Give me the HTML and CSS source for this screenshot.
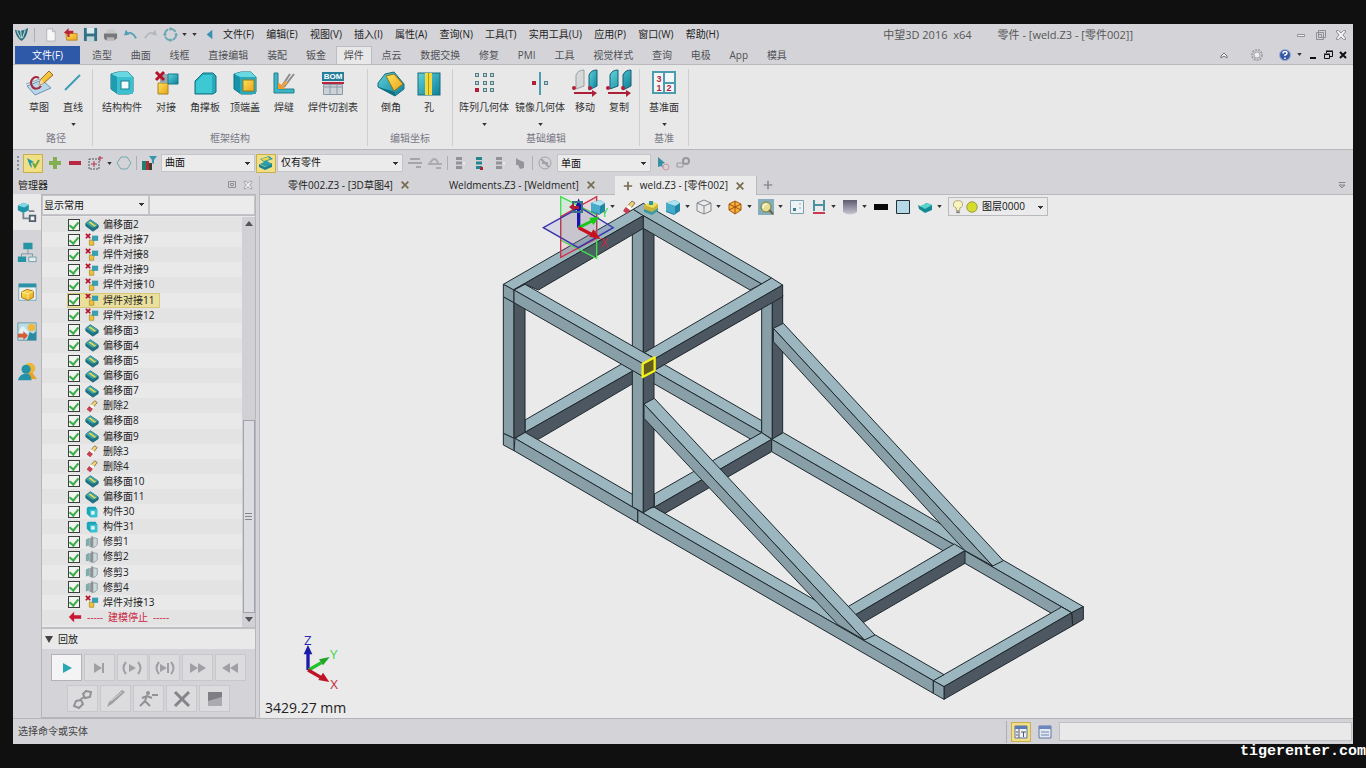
FILE: index.html
```
<!DOCTYPE html>
<html lang="zh-CN">

<head>
  <meta charset="UTF-8">
  <title>中望3D 2016 x64</title>
  <link rel="stylesheet" href="styles.css">
</head>

<body>
  <!-- Icon sprite -->
  <svg class="sprite" aria-hidden="true">
    <defs>
      <linearGradient id="teal" x1="0" y1="0" x2="1" y2="1"><stop offset="0" stop-color="#5fd3dc"/><stop offset="1" stop-color="#0e7f98"/></linearGradient>
      <linearGradient id="gold" x1="0" y1="0" x2="1" y2="1"><stop offset="0" stop-color="#ffe35a"/><stop offset="1" stop-color="#e8a41c"/></linearGradient>
      <linearGradient id="grey" x1="0" y1="0" x2="0" y2="1"><stop offset="0" stop-color="#5d5b70"/><stop offset="1" stop-color="#c9c8d4"/></linearGradient>
    </defs>
    <!-- large ribbon icons -->
    <symbol id="b-sketch" viewBox="0 0 28 28"><path d="M2 17l15-6 9 8-16 7z" fill="#b9d5e8" stroke="#6d93b0"/><path d="M1 15l14-5 5 3" fill="none" stroke="#7fa4bd"/><path d="M14 9c-5-3-10 3-7 8 2 4 7 3 9 0" fill="none" stroke="#a4283c" stroke-width="2"/><path d="M14 16l2-6 8-8 4 4-9 8z" fill="url(#gold)" stroke="#9a6b1c"/><path d="M14 16l2-6 3 4z" fill="#f5dcae"/></symbol>
    <symbol id="b-line" viewBox="0 0 28 28"><path d="M6 21L21 6" stroke="#3f9db5" stroke-width="2"/></symbol>
    <symbol id="b-struct" viewBox="0 0 28 28"><path d="M3 5l7-2h10l5 5v15l-4 2H10l-7-5z" fill="#1593a8" stroke="#0e7385"/><path d="M3 5l7-2h10l5 5H9z" fill="#68d8e2"/><path d="M3 5l6 3v17l-6-5z" fill="#1e9db0"/><rect x="9" y="8" width="16" height="17" fill="#3cc0cf"/><rect x="13" y="12" width="8" height="8" fill="#f3fbfc" stroke="#187f90"/></symbol>
    <symbol id="b-butt" viewBox="0 0 28 28"><path d="M6 14h10v11H6z" fill="url(#gold)" stroke="#a98022"/><path d="M8 5h8v9H8z" fill="#98a9ae"/><path d="M16 5h10v10H16z" fill="url(#teal)" stroke="#137a8c"/><path d="M4 3l8 8M12 3l-8 8" stroke="#b5122e" stroke-width="3"/></symbol>
    <symbol id="b-gusset" viewBox="0 0 28 28"><path d="M4 12l8-8h10l3 3v16l-3 2H4z" fill="#2ba9ba" stroke="#0f7484"/><path d="M5 13l7-7h9v18H5z" fill="#3cc9d4"/></symbol>
    <symbol id="b-cap" viewBox="0 0 28 28"><path d="M3 5l7-2h10l5 5v15l-4 2H10l-7-5z" fill="#1593a8" stroke="#0e7385"/><path d="M3 5l7-2h10l5 5H9z" fill="#68d8e2"/><path d="M9 8h16v17H9z" fill="#2ba9ba"/><rect x="12" y="11" width="11" height="11" fill="url(#gold)" stroke="#9f7c16"/></symbol>
    <symbol id="b-weld" viewBox="0 0 28 28"><path d="M4 4h4v16h16v4H4z" fill="#3fb4c4" stroke="#22808f"/><path d="M12 17L20 5M14 18L24 5" stroke="#8e8b8a" stroke-width="2"/><path d="M9 20l6-8 3 2z" fill="#f5a43a"/><path d="M8 13v7h8z" fill="#f29a2c"/></symbol>
    <symbol id="b-chamfer" viewBox="0 0 28 28"><path d="M1 14l7-9 9-2 10 12v5l-9 7L1 18z" fill="url(#teal)" stroke="#176c7c"/><path d="M9 7l8-2 9 10-9 7z" fill="url(#gold)" stroke="#8b7420"/><path d="M1 18l17 5v4z" fill="#0d7186"/></symbol>
    <symbol id="b-hole" viewBox="0 0 28 28"><rect x="3" y="4" width="22" height="22" fill="url(#teal)" stroke="#166d7b"/><rect x="10" y="4" width="7" height="22" fill="#f5d83c"/><path d="M13.500 4v22" stroke="#b99311"/></symbol>
    <symbol id="b-pattern" viewBox="0 0 28 28"><g fill="#bcd6da" stroke="#557b85"><rect x="5.500" y="4.500" width="3" height="3"/><rect x="13.500" y="4.500" width="3" height="3"/><rect x="20.500" y="4.500" width="3" height="3"/><rect x="5.500" y="12.500" width="3" height="3"/><rect x="13.500" y="12.500" width="3" height="3"/><rect x="20.500" y="12.500" width="3" height="3"/><rect x="13.500" y="19.500" width="3" height="3"/><rect x="20.500" y="19.500" width="3" height="3"/></g><rect x="5" y="19" width="4" height="4" fill="#b41d38"/></symbol>
    <symbol id="b-mirror" viewBox="0 0 28 28"><path d="M14 3v23" stroke="#4b9eb0" stroke-width="2"/><rect x="6" y="12" width="4" height="4" fill="#b41d38"/><rect x="18.500" y="12.500" width="3" height="3" fill="#bcd6da" stroke="#557b85"/></symbol>
    <symbol id="b-move" viewBox="0 0 28 28"><path d="M5 20V6q2-5 8-5v16z" fill="#d5d8d8" stroke="#9ba0a0"/><path d="M18 21V6q2-5 8-5v16z" fill="url(#teal)" stroke="#155e70"/><path d="M3 23h18v-2l5 3-5 4v-3H3z" fill="#aa2138"/><circle cx="3" cy="19" r="2" fill="#b41d38"/><circle cx="19" cy="19" r="2" fill="#b41d38"/></symbol>
    <symbol id="b-copy" viewBox="0 0 28 28"><path d="M5 20V6q2-5 8-5v16zM18 21V6q2-5 8-5v16z" fill="url(#teal)" stroke="#155e70"/><path d="M3 23h18v-2l5 3-5 4v-3H3z" fill="#aa2138"/><circle cx="3" cy="19" r="2" fill="#b41d38"/><circle cx="18" cy="19" r="2" fill="#b41d38"/></symbol>
    <!-- tree and view icons -->
    <symbol id="s-offset" viewBox="0 0 16 16"><path d="M1 6l5-4 9 6v3l-6 4-8-6z" fill="#1f7485" stroke="#1b6571"/><path d="M1 6l5-4 9 6-6 3z" fill="#3fa5ac"/><path d="M4 5l2-1 7 5-2 1z" fill="#e5d64a"/></symbol>
    <symbol id="s-butt" viewBox="0 0 16 16"><path d="M5 8h5v6H5z" fill="#ecc13c" stroke="#b89335"/><path d="M8 3h7v6H8z" fill="#3a9fb0"/><path d="M1 1l5 5M6 1L1 6" stroke="#b5122e" stroke-width="2"/></symbol>
    <symbol id="s-del" viewBox="0 0 16 16"><path d="M3 11L11 2l3 2-8 10z" fill="#f0d479" stroke="#87724b"/><path d="M2 12l3-4 4 3-3 4z" fill="#c93d55"/><path d="M5 8l2-2 4 3-2 2z" fill="#fff"/></symbol>
    <symbol id="s-struct" viewBox="0 0 16 16"><path d="M2 3l2-1h8l2 3v8l-2 1H6l-4-4z" fill="#1aa3b7"/><path d="M5 5h9v9H6z" fill="#38c2d0"/><rect x="7" y="7" width="4" height="4" fill="#e5f6f7"/></symbol>
    <symbol id="s-trim" viewBox="0 0 16 16"><path d="M1 5l4-2v9l-4 1z" fill="#7badad"/><path d="M5 4l4-2v11l-4 1z" fill="#9b9fa4"/><path d="M9 3l5 1v7l-3 3H9z" fill="#ccd8da" stroke="#8d9c9e"/><path d="M8 1v14" stroke="#777d80"/></symbol>
    <symbol id="s-stop" viewBox="0 0 16 16"><path d="M1 8l6-6v4h8v4H7v4z" fill="#c81836"/></symbol>
    <symbol id="s-cube" viewBox="0 0 16 16"><path d="M1 4l9-3 5 3v8l-6 4-8-3z" fill="#2484a4"/><path d="M1 4l9-3 5 3-5 3z" fill="#aee2ee"/><path d="M1 4l9 3v8l-9-3z" fill="#46aaca"/></symbol>
    <symbol id="s-wire" viewBox="0 0 16 16"><path d="M1 4l7-3 7 3v8l-7 3-7-3zM1 4l7 3 7-3M8 7v8" fill="none" stroke="#81878d"/></symbol>
    <symbol id="s-hex" viewBox="0 0 16 16"><path d="M8 2l6 3v6l-6 4-6-4V5z" fill="#f8b43b" stroke="#ab5c13"/><path d="M2 5l6 3 6-3M8 8v7M2 11l6-3 6 3M8 2v6" fill="none" stroke="#a14d13"/></symbol>
    <symbol id="s-ycube" viewBox="0 0 16 16"><path d="M1 6l8-3 6 2v6l-6 4-8-3z" fill="#c9b23b"/><path d="M1 6l8-3 6 2-5 4z" fill="#f0df5b"/><path d="M6 2h4v4H6z" fill="#2d99a3"/><path d="M1 10l8 3 6-4v3l-6 4-8-3z" fill="#3d9aa0"/></symbol>
    <symbol id="s-zoom" viewBox="0 0 16 16"><rect width="16" height="16" fill="#84aebb"/><circle cx="8" cy="8" r="5" fill="#e4df91" stroke="#787b45"/><path d="M11 11l4 4" stroke="#776338" stroke-width="2"/><path d="M5 9q0-4 4-4" fill="none" stroke="#fff"/></symbol>
    <symbol id="s-frame" viewBox="0 0 16 16"><path d="M1.500 1.500h13v13h-13z" fill="#edf3f5" stroke="#7aa0ac"/><path d="M4 9h3v3H4z" fill="#4a7a8f"/><path d="M11 4v2M11 8v2" stroke="#8eabb5"/></symbol>
    <symbol id="s-dim" viewBox="0 0 16 16"><path d="M3 1v11M13 1v11M3 6h10" stroke="#4c90a2" stroke-width="2"/><path d="M2 14h12" stroke="#cb3950" stroke-width="2"/></symbol>
    <symbol id="s-shade" viewBox="0 0 16 16"><path d="M1 1h14v12q-7 5-14 0z" fill="url(#grey)"/></symbol>
    <symbol id="s-black" viewBox="0 0 16 16"><path d="M1 5h14v6H1z" fill="#080808"/></symbol>
    <symbol id="s-sky" viewBox="0 0 16 16"><path d="M1.500 1.500h13v13h-13z" fill="#b6d9e6" stroke="#24313a"/></symbol>
    <symbol id="s-sheet" viewBox="0 0 16 16"><path d="M1 6l4 2 4-4 6 2v5l-7 3-6-4z" fill="#148b94"/><path d="M3 7l7-3 5 2-7 4z" fill="#5bd2c9"/></symbol>
    <symbol id="s-exit" viewBox="0 0 16 16"><path d="M5 3h9v10H5z" fill="none" stroke="#377389" stroke-width="2"/><path d="M1 8l5-4v3h5v3H6v2z" fill="#b51c31"/></symbol>
    <!-- quick access icons -->
    <symbol id="q-logo" viewBox="0 0 16 16"><path d="M1 3q7 3 14-2-1 10-7 14Q2 11 1 3z" fill="#2b6f7c"/><path d="M3 4l4 8M7 3l1 9M12 3l-3 9" stroke="#d7e7e9"/></symbol>
    <symbol id="q-new" viewBox="0 0 16 16"><path d="M4 2h6l3 3v10H4z" fill="#f7f7f7" stroke="#b2b3ba"/><path d="M10 2v3h3" fill="none" stroke="#b2b3ba"/></symbol>
    <symbol id="q-open" viewBox="0 0 16 16"><path d="M3 7h12v7H4z" fill="url(#gold)" stroke="#be852b"/><path d="M1 6l5-5v3h5v3H7v4q-4-1-2-3z" fill="#bb2337"/></symbol>
    <symbol id="q-save" viewBox="0 0 16 16"><path d="M1 1h14v14H1z" fill="#327185"/><path d="M4 1h8v6H4z" fill="#dce9ed"/><path d="M4 10h8v5H4z" fill="#c4d2d9"/></symbol>
    <symbol id="q-print" viewBox="0 0 16 16"><path d="M4 3l8-1 2 5H3z" fill="#c7c7c7"/><path d="M1 7h14v5l-3 2H3l-2-2z" fill="#77787b"/><path d="M4 11h8v3H4z" fill="#b9b9b9"/></symbol>
    <symbol id="q-undo" viewBox="0 0 16 16"><path d="M3 8q6-5 11 4" fill="none" stroke="#539fb5" stroke-width="2"/><path d="M1 9l2-6 4 5z" fill="#539fb5"/></symbol>
    <symbol id="q-redo" viewBox="0 0 16 16"><path d="M13 8Q7 3 2 12" fill="none" stroke="#b5b8be" stroke-width="2"/><path d="M15 9l-2-6-4 5z" fill="#b5b8be"/></symbol>
    <symbol id="q-target" viewBox="0 0 16 16"><circle cx="8" cy="8" r="6" fill="none" stroke="#6ea7b5" stroke-width="2" stroke-dasharray="7 2"/><path d="M8 0l2 2-2 2-2-2zM8 12l2 2-2 2-2-2zM0 8l2-2 2 2-2 2zM12 8l2-2 2 2-2 2z" fill="#6ea7b5"/></symbol>
    <symbol id="q-left" viewBox="0 0 16 16"><path d="M11 3v10L5 8z" fill="#3991b2"/></symbol>
    <!-- selection bar icons -->
    <symbol id="f-pick" viewBox="0 0 16 16"><path d="M2 3l7 4-3 1 1 5-2-2z" fill="#1f9aa9"/><path d="M8 8l2 4 4-7" fill="none" stroke="#70a64a" stroke-width="2"/></symbol>
    <symbol id="f-plus" viewBox="0 0 16 16"><path d="M6 2h4v4h4v4h-4v4H6v-4H2V6h4z" fill="#83ae52"/></symbol>
    <symbol id="f-minus" viewBox="0 0 16 16"><path d="M2 6h12v4H2z" fill="#b92843"/></symbol>
    <symbol id="f-box" viewBox="0 0 16 16"><path d="M2 4h10v10H2z" fill="none" stroke="#4e5963" stroke-dasharray="2 1"/><path d="M7 6v6M4 9h6M13 1v5M11 3h5" stroke="#b5304b"/></symbol>
    <symbol id="f-hex" viewBox="0 0 16 16"><path d="M5 2h6l4 6-4 6H5L1 8z" fill="none" stroke="#74a9ad"/></symbol>
    <symbol id="f-filter" viewBox="0 0 16 16"><path d="M1 6h4v9H1z" fill="#1d7f73"/><path d="M5 6h3v9H5z" fill="#b22b32"/><path d="M8 8h3v7H8z" fill="#423b30"/><path d="M8 1h8l-3 4v4l-2-1V5z" fill="#3897ac"/></symbol>
    <symbol id="f-part" viewBox="0 0 16 16"><path d="M1 9l6 3 7-4v4l-7 3-6-3z" fill="#1b8390"/><path d="M2 4l9-3 4 3-6 2 5 3-6 3-6-3 4-2z" fill="#2d9ba8"/><path d="M3 4l7-2 2 2-6 2z" fill="#efd44c"/></symbol>
    <symbol id="f-align" viewBox="0 0 16 16"><path d="M3 4h10M1 8h14M9 12h5" stroke="#a5a6aa" stroke-width="2"/></symbol>
    <symbol id="f-align2" viewBox="0 0 16 16"><path d="M3 8q5-8 8 0M1 9h14M9 13h5" fill="none" stroke="#abacb0" stroke-width="2"/></symbol>
    <symbol id="f-stack" viewBox="0 0 16 16"><path d="M4 2h6v3H4zM4 6.500h6v3H4zM4 11h6v3H4z" fill="#929398"/><path d="M12 7v3" stroke="#fff"/></symbol>
    <symbol id="f-stack2" viewBox="0 0 16 16"><path d="M4 2h6v3H4zM4 6.500h6v3H4zM4 11h6v3H4z" fill="#25858f"/><path d="M8 12h3v3H8z" fill="#a92639"/></symbol>
    <symbol id="f-hand" viewBox="0 0 16 16"><path d="M4 3l3 2 5 2v6l-4 1-2-4H4z" fill="#94959a"/></symbol>
    <symbol id="f-none" viewBox="0 0 16 16"><circle cx="8" cy="8" r="6" fill="none" stroke="#a2a3a8"/><path d="M4 4l8 8M5 8h6" stroke="#a2a3a8" stroke-width="2"/></symbol>
    <symbol id="f-cursor" viewBox="0 0 16 16"><path d="M3 2l7 6-3 1 1 4-2-2-3 1z" fill="#3492a4"/><circle cx="11" cy="12" r="3" fill="none" stroke="#d4949b"/></symbol>
    <symbol id="f-link" viewBox="0 0 16 16"><circle cx="11" cy="6" r="3" fill="none" stroke="#97989d" stroke-width="2"/><path d="M2 8h6v4H2z" fill="none" stroke="#97989d"/></symbol>
    <!-- window icons -->
    <symbol id="w-min" viewBox="0 0 12 12"><path d="M2.500 5.500h7v2h-7z" fill="#f5f5f7" stroke="#8f9095"/></symbol>
    <symbol id="w-max" viewBox="0 0 12 12"><path d="M3.500 1.500h7v7h-7zM1.500 3.500h7v7h-7zM3.500 5.500h3v3h-3z" fill="none" stroke="#8f9095"/></symbol>
    <symbol id="w-float" viewBox="0 0 10 10"><path d="M1.500 1.500h7v6h-7zM3.500 3.500h3v2h-3z" fill="none" stroke="#8f9095"/></symbol>
    <symbol id="w-close" viewBox="0 0 12 12"><path d="M1.500 1.500h2L6 4l2.500-2.500h2V3L8 6l2.500 3v1.500h-2L6 8l-2.500 2.500h-2V9L4 6 1.500 3z" fill="#f0f0f2" stroke="#8f9095"/></symbol>
    <symbol id="w-min2" viewBox="0 0 12 12"><path d="M3 9h6" stroke="#111" stroke-width="2"/></symbol>
    <symbol id="w-max2" viewBox="0 0 12 12"><path d="M4.500 4V2.500h6v5H8M2.500 5.500h5v4h-5zM4 2h7M2 5h6" fill="none" stroke="#111"/></symbol>
    <symbol id="w-close2" viewBox="0 0 12 12"><path d="M3 3l6 6M9 3L3 9" stroke="#111" stroke-width="2"/></symbol>
    <symbol id="w-x" viewBox="0 0 12 12"><path d="M2 2l8 8M10 2l-8 8" stroke="#776b4f" stroke-width="2"/></symbol>
    <symbol id="w-plus" viewBox="0 0 12 12"><path d="M6 1v10M1 6h10" stroke="currentColor" stroke-width="2"/></symbol>
    <symbol id="w-up" viewBox="0 0 12 12"><path d="M3 7l3-3 3 3v2L6 7 3 9z" fill="#fff" stroke="#6f7075"/></symbol>
    <symbol id="w-gear" viewBox="0 0 12 12"><circle cx="6" cy="6" r="5" fill="none" stroke="#a3a4a9" stroke-width="2" stroke-dasharray="2 1"/><circle cx="6" cy="6" r="3" fill="#efeff1" stroke="#a3a4a9"/></symbol>
    <symbol id="w-help" viewBox="0 0 12 12"><circle cx="6" cy="6" r="5.500" fill="#3759a5" stroke="#9cafd6"/><path d="M4 4.500q0-2 2-2t2 1.700Q8 5.500 6 6v1M6 8.500V10" fill="none" stroke="#fff" stroke-width="1.500"/></symbol>
    <symbol id="w-drop" viewBox="0 0 12 12"><path d="M2 3h8M2.500 6h7L6 9.500z" stroke="#77787e" fill="#c3c3c8"/></symbol>
    <symbol id="w-caret" viewBox="0 0 6 4"><path d="M0 0h6L3 4z" fill="#333"/></symbol>
    <!-- manager page icons -->
    <symbol id="m-tree" viewBox="0 0 24 24"><path d="M2 5l6-3 6 2v6l-6 3-6-3z" fill="#2093aa"/><path d="M2 5l6-3 6 2-5 3z" fill="#83d6e2"/><path d="M8 13v6h6M14 11h6" fill="none" stroke="#79848d" stroke-width="2"/><path d="M15 16h6v6h-6z" fill="#f4f6f7" stroke="#50606c" stroke-width="2"/></symbol>
    <symbol id="m-asm" viewBox="0 0 24 24"><path d="M8 2h10v7H8zM2 17h9v6H2z" fill="#2594a5"/><path d="M14 17.500h8v5h-8z" fill="#e2edf0" stroke="#6a9ba7"/><path d="M13 9v5M6 17v-3h12v3" fill="none" stroke="#78909c"/></symbol>
    <symbol id="m-vis" viewBox="0 0 24 24"><path d="M3 3h19v18H3z" fill="#edf1f2" stroke="#71a7b6"/><path d="M3 3h19v4H3z" fill="#2f91a8"/><path d="M6 12l6-3 7 2v7l-6 3-7-3z" fill="url(#gold)" stroke="#a9781b"/><path d="M6 12l7 2 6-3M13 14v6" fill="none" stroke="#fff0a0"/></symbol>
    <symbol id="m-view" viewBox="0 0 24 24"><path d="M2 2h20v19H2z" fill="#bbdce6" stroke="#6597a5"/><path d="M12 21l3-9 4 2 3-3v10z" fill="#2b8ca1"/><path d="M3 12q4-10 8-3l3 4H3z" fill="#e8f2f4"/><circle cx="17" cy="7" r="4" fill="#f0b738"/><path d="M2 14h6v-3l5 5-5 5v-3H2z" fill="#d85b33"/></symbol>
    <symbol id="m-role" viewBox="0 0 24 24"><circle cx="15" cy="8" r="6" fill="#edb637"/><path d="M10 19l3-6h5l5 7z" fill="#e5a226"/><circle cx="11" cy="9" r="5" fill="#2593a7"/><path d="M2 21q2-6 7-7h4q3 1 4 7z" fill="#2593a7"/></symbol>
    <!-- playback icons -->
    <symbol id="p-play" viewBox="0 0 24 20"><path d="M8 5l9 5-9 5z" fill="#2ba7b3"/></symbol>
    <symbol id="p-step" viewBox="0 0 24 20"><path d="M7 5l8 5-8 5z" fill="#a0a0a4"/><path d="M16 5v10" stroke="#a0a0a4" stroke-width="2"/></symbol>
    <symbol id="p-upto" viewBox="0 0 24 20"><path d="M9 6l7 4-7 4z" fill="#a0a0a4"/><path d="M6 4q-5 6 0 12M18 4q5 6 0 12" fill="none" stroke="#a0a0a4" stroke-width="2"/></symbol>
    <symbol id="p-next" viewBox="0 0 24 20"><path d="M7 6l7 4-7 4z" fill="#a0a0a4"/><path d="M6 4q-5 6 0 12M18 4q5 6 0 12M15 5v10" fill="none" stroke="#a0a0a4" stroke-width="2"/></symbol>
    <symbol id="p-ff" viewBox="0 0 24 20"><path d="M4 5l8 5-8 5zM12 5l8 5-8 5z" fill="#a0a0a4"/></symbol>
    <symbol id="p-rew" viewBox="0 0 24 20"><path d="M12 5l-8 5 8 5zM20 5l-8 5 8 5z" fill="#a0a0a4"/></symbol>
    <symbol id="p-chain" viewBox="0 0 24 20"><path d="M15 2l5 1-1 5-5 1-2-4zM5 12l5-1 2 4-4 4-5-2zM9 11l5-4" fill="none" stroke="#929296" stroke-width="2"/></symbol>
    <symbol id="p-pen" viewBox="0 0 24 20"><path d="M3 18l2-5L18 1l3 2L8 15z" fill="#a0a0a4"/><path d="M7 12L18 3" stroke="#d8d8da"/></symbol>
    <symbol id="p-run" viewBox="0 0 24 20"><circle cx="11" cy="4" r="2" fill="#929296"/><path d="M10 6l-2 6-5 5M8 12l5 5M5 9l5-2 5 2M15 6h6" fill="none" stroke="#929296" stroke-width="2"/></symbol>
    <symbol id="p-del" viewBox="0 0 24 20"><path d="M5 3l14 14M19 3L5 17" stroke="#858589" stroke-width="3"/></symbol>
    <symbol id="p-box" viewBox="0 0 24 20"><path d="M5 3h14v14H5z" fill="#aaaab0"/><path d="M5 3h14v5L5 12z" fill="#7e7e84"/></symbol>
  </svg>

  <main class="app">
    <header class="titlebar">
      <div class="quick">
        <svg class="icon"><use href="#q-logo"/></svg>
        <span class="sep"></span>
        <button aria-label="新建"><svg class="icon"><use href="#q-new"/></svg></button>
        <button aria-label="打开"><svg class="icon"><use href="#q-open"/></svg></button>
        <button aria-label="保存"><svg class="icon"><use href="#q-save"/></svg></button>
        <button aria-label="打印"><svg class="icon"><use href="#q-print"/></svg></button>
        <button aria-label="撤销"><svg class="icon"><use href="#q-undo"/></svg></button>
        <button aria-label="重做"><svg class="icon"><use href="#q-redo"/></svg></button>
        <button class="wide" aria-label="定位"><svg class="icon"><use href="#q-target"/></svg><svg class="caret"><use href="#w-caret"/></svg></button>
        <button aria-label="自定义"><svg class="caret"><use href="#w-caret"/></svg></button>
        <button aria-label="收起菜单"><svg class="icon"><use href="#q-left"/></svg></button>
      </div>
      <nav class="menu">
        <button>文件(F)</button>
        <button>编辑(E)</button>
        <button>视图(V)</button>
        <button>插入(I)</button>
        <button>属性(A)</button>
        <button>查询(N)</button>
        <button>工具(T)</button>
        <button>实用工具(U)</button>
        <button>应用(P)</button>
        <button>窗口(W)</button>
        <button>帮助(H)</button>
      </nav>
      <h1 class="title"><span>中望3D 2016&nbsp; x64</span><span>零件 - [weld.Z3 - [零件002]]</span></h1>
      <div class="winctl">
        <button aria-label="最小化"><svg><use href="#w-min"/></svg></button>
        <button aria-label="还原"><svg><use href="#w-max"/></svg></button>
        <button aria-label="关闭"><svg><use href="#w-close"/></svg></button>
      </div>
    </header>

    <div class="tabbar">
      <button class="file-tab">文件(F)</button>
      <nav class="tabs">
        <button>造型</button>
        <button>曲面</button>
        <button>线框</button>
        <button>直接编辑</button>
        <button>装配</button>
        <button>钣金</button>
        <button class="active">焊件</button>
        <button>点云</button>
        <button>数据交换</button>
        <button>修复</button>
        <button>PMI</button>
        <button>工具</button>
        <button>视觉样式</button>
        <button>查询</button>
        <button>电极</button>
        <button>App</button>
        <button>模具</button>
      </nav>
      <div class="docctl">
        <button class="far" aria-label="折叠"><svg><use href="#w-up"/></svg></button>
        <button class="mid" aria-label="设置"><svg><use href="#w-gear"/></svg></button>
        <button aria-label="帮助"><svg><use href="#w-help"/></svg></button>
        <svg class="caret"><use href="#w-caret"/></svg>
        <button aria-label="最小化文档"><svg><use href="#w-min2"/></svg></button>
        <button aria-label="还原文档"><svg><use href="#w-max2"/></svg></button>
        <button aria-label="关闭文档"><svg><use href="#w-close2"/></svg></button>
      </div>
    </div>

    <section class="ribbon">
      <div class="group path">
        <div class="cmds tight">
          <button><svg class="big"><use href="#b-sketch"/></svg>草图</button>
          <button><svg class="big"><use href="#b-line"/></svg>直线<svg class="caret"><use href="#w-caret"/></svg></button>
        </div>
        <p>路径</p>
      </div>
      <div class="group">
        <div class="cmds">
          <button><svg class="big"><use href="#b-struct"/></svg>结构构件</button>
          <button><svg class="big"><use href="#b-butt"/></svg>对接</button>
          <button><svg class="big"><use href="#b-gusset"/></svg>角撑板</button>
          <button><svg class="big"><use href="#b-cap"/></svg>顶端盖</button>
          <button><svg class="big"><use href="#b-weld"/></svg>焊缝</button>
          <button><svg class="big" viewBox="0 0 28 28"><path d="M3 3h22v9H3z" fill="#257f9b"/><text x="14" y="10" class="bom-text">BOM</text><path d="M3 14h22" stroke="#b8253e" stroke-width="2"/><path d="M4.500 15.500h19v10h-19zM11 15v11M18 15v11M4 18h20" fill="#cbd3d9" stroke="#8d99a5"/></svg>焊件切割表</button>
        </div>
        <p>框架结构</p>
      </div>
      <div class="group">
        <div class="cmds">
          <button><svg class="big"><use href="#b-chamfer"/></svg>倒角</button>
          <button><svg class="big"><use href="#b-hole"/></svg>孔</button>
        </div>
        <p>编辑坐标</p>
      </div>
      <div class="group narrow">
        <div class="cmds tight">
          <button><svg class="big"><use href="#b-pattern"/></svg>阵列几何体<svg class="caret"><use href="#w-caret"/></svg></button>
          <button><svg class="big"><use href="#b-mirror"/></svg>镜像几何体<svg class="caret"><use href="#w-caret"/></svg></button>
          <button><svg class="big"><use href="#b-move"/></svg>移动</button>
          <button><svg class="big"><use href="#b-copy"/></svg>复制</button>
        </div>
        <p>基础编辑</p>
      </div>
      <div class="group">
        <div class="cmds">
          <button><svg class="big" viewBox="0 0 28 28"><path d="M3 3h22v21H3zM14 3v21M14 14h11" fill="#f3f6f7" stroke="#4a9cae" stroke-width="2"/><g class="datum-text"><text x="9" y="13">3</text><text x="9" y="22">1</text><text x="19" y="22">2</text></g></svg>基准面<svg class="caret"><use href="#w-caret"/></svg></button>
        </div>
        <p>基准</p>
      </div>
    </section>

    <!-- Selection filter bar -->
    <div class="filterbar">
      <span class="grip"></span>
      <button class="on" aria-label="选择"><svg class="icon"><use href="#f-pick"/></svg></button>
      <button aria-label="添加"><svg class="icon"><use href="#f-plus"/></svg></button>
      <button aria-label="移除"><svg class="icon"><use href="#f-minus"/></svg></button>
      <button class="wide" aria-label="框选"><svg class="icon"><use href="#f-box"/></svg><svg class="caret"><use href="#w-caret"/></svg></button>
      <button aria-label="多边形"><svg class="icon"><use href="#f-hex"/></svg></button>
      <span class="sep"></span>
      <button aria-label="过滤器"><svg class="icon"><use href="#f-filter"/></svg></button>
      <div class="filters">
        <select class="combo pick" aria-label="过滤类型"><option>曲面</option></select>
        <button class="on" aria-label="零件"><svg class="icon"><use href="#f-part"/></svg></button>
        <select class="combo scope" aria-label="选择范围"><option>仅有零件</option></select>
      </div>
      <button aria-label="对齐"><svg class="icon"><use href="#f-align"/></svg></button>
      <button aria-label="相切"><svg class="icon"><use href="#f-align2"/></svg></button>
      <span class="sep"></span>
      <button aria-label="列表一"><svg class="icon"><use href="#f-stack"/></svg></button>
      <button aria-label="列表二"><svg class="icon"><use href="#f-stack2"/></svg></button>
      <button aria-label="列表三"><svg class="icon"><use href="#f-stack"/></svg></button>
      <button aria-label="拖动"><svg class="icon"><use href="#f-hand"/></svg></button>
      <span class="sep"></span>
      <button aria-label="禁用"><svg class="icon"><use href="#f-none"/></svg></button>
      <select class="combo pick" aria-label="面类型"><option>单面</option></select>
      <button aria-label="光标"><svg class="icon"><use href="#f-cursor"/></svg></button>
      <button aria-label="链接"><svg class="icon"><use href="#f-link"/></svg></button>
    </div>

    <div class="work">
      <aside class="manager">
        <div class="manager-head">
          <h2>管理器</h2>
          <button aria-label="浮动"><svg><use href="#w-float"/></svg></button>
          <button aria-label="关闭管理器"><svg><use href="#w-close"/></svg></button>
        </div>
        <div class="manager-body">
          <nav class="pages">
            <button class="active" aria-label="历史"><svg><use href="#m-tree"/></svg></button>
            <button aria-label="装配"><svg><use href="#m-asm"/></svg></button>
            <button aria-label="视觉"><svg><use href="#m-vis"/></svg></button>
            <button aria-label="视图"><svg><use href="#m-view"/></svg></button>
            <button aria-label="角色"><svg><use href="#m-role"/></svg></button>
          </nav>
          <div class="panel">
            <div class="find">
              <select class="combo" aria-label="显示"><option>显示常用</option></select>
              <input type="text" aria-label="搜索">
            </div>
            <div class="history">
              <ul class="tree">
                <li><label><input type="checkbox" checked><svg><use href="#s-offset"/></svg>偏移面2</label></li>
                <li><label><input type="checkbox" checked><svg><use href="#s-butt"/></svg>焊件对接7</label></li>
                <li><label><input type="checkbox" checked><svg><use href="#s-butt"/></svg>焊件对接8</label></li>
                <li><label><input type="checkbox" checked><svg><use href="#s-butt"/></svg>焊件对接9</label></li>
                <li><label><input type="checkbox" checked><svg><use href="#s-butt"/></svg>焊件对接10</label></li>
                <li class="hot"><label><input type="checkbox" checked><svg><use href="#s-butt"/></svg>焊件对接11</label></li>
                <li><label><input type="checkbox" checked><svg><use href="#s-butt"/></svg>焊件对接12</label></li>
                <li><label><input type="checkbox" checked><svg><use href="#s-offset"/></svg>偏移面3</label></li>
                <li><label><input type="checkbox" checked><svg><use href="#s-offset"/></svg>偏移面4</label></li>
                <li><label><input type="checkbox" checked><svg><use href="#s-offset"/></svg>偏移面5</label></li>
                <li><label><input type="checkbox" checked><svg><use href="#s-offset"/></svg>偏移面6</label></li>
                <li><label><input type="checkbox" checked><svg><use href="#s-offset"/></svg>偏移面7</label></li>
                <li><label><input type="checkbox" checked><svg><use href="#s-del"/></svg>删除2</label></li>
                <li><label><input type="checkbox" checked><svg><use href="#s-offset"/></svg>偏移面8</label></li>
                <li><label><input type="checkbox" checked><svg><use href="#s-offset"/></svg>偏移面9</label></li>
                <li><label><input type="checkbox" checked><svg><use href="#s-del"/></svg>删除3</label></li>
                <li><label><input type="checkbox" checked><svg><use href="#s-del"/></svg>删除4</label></li>
                <li><label><input type="checkbox" checked><svg><use href="#s-offset"/></svg>偏移面10</label></li>
                <li><label><input type="checkbox" checked><svg><use href="#s-offset"/></svg>偏移面11</label></li>
                <li><label><input type="checkbox" checked><svg><use href="#s-struct"/></svg>构件30</label></li>
                <li><label><input type="checkbox" checked><svg><use href="#s-struct"/></svg>构件31</label></li>
                <li><label><input type="checkbox" checked><svg><use href="#s-trim"/></svg>修剪1</label></li>
                <li><label><input type="checkbox" checked><svg><use href="#s-trim"/></svg>修剪2</label></li>
                <li><label><input type="checkbox" checked><svg><use href="#s-trim"/></svg>修剪3</label></li>
                <li><label><input type="checkbox" checked><svg><use href="#s-trim"/></svg>修剪4</label></li>
                <li><label><input type="checkbox" checked><svg><use href="#s-butt"/></svg>焊件对接13</label></li>
                <li class="stop"><svg><use href="#s-stop"/></svg><span>-----</span>建模停止<span>-----</span></li>
              </ul>
              <div class="scroll">
                <span class="up"></span>
                <span class="thumb"></span>
                <span class="down"></span>
              </div>
            </div>
            <h3 class="replay-head"><span class="tri"></span>回放</h3>
            <div class="replay">
              <div class="keys">
                <button class="live" aria-label="播放"><svg><use href="#p-play"/></svg></button>
                <button aria-label="单步"><svg><use href="#p-step"/></svg></button>
                <button aria-label="播放到"><svg><use href="#p-upto"/></svg></button>
                <button aria-label="播放下一个"><svg><use href="#p-next"/></svg></button>
                <button aria-label="快进"><svg><use href="#p-ff"/></svg></button>
                <button aria-label="快退"><svg><use href="#p-rew"/></svg></button>
              </div>
              <div class="keys second">
                <button aria-label="关联"><svg><use href="#p-chain"/></svg></button>
                <button aria-label="编辑"><svg><use href="#p-pen"/></svg></button>
                <button aria-label="跳过"><svg><use href="#p-run"/></svg></button>
                <button aria-label="删除"><svg><use href="#p-del"/></svg></button>
                <button aria-label="封装"><svg><use href="#p-box"/></svg></button>
              </div>
            </div>
          </div>
        </div>
      </aside>

      <section class="docs">
        <div class="doctabs">
          <div class="doctab">零件002.Z3 - [3D草图4]<button aria-label="关闭零件002"><svg><use href="#w-x"/></svg></button></div>
          <div class="doctab">Weldments.Z3 - [Weldment]<button aria-label="关闭Weldments"><svg><use href="#w-x"/></svg></button></div>
          <div class="doctab active"><svg><use href="#w-plus"/></svg>weld.Z3 - [零件002]<button aria-label="关闭weld"><svg><use href="#w-x"/></svg></button></div>
          <button class="newtab" aria-label="新标签"><svg><use href="#w-plus"/></svg></button>
          <button class="tablist" aria-label="标签列表"><svg><use href="#w-drop"/></svg></button>
        </div>

        <div class="viewport">
          <!-- Frame model, three units per pixel -->
          <svg class="scene" viewBox="0 0 3279 1569" preserveAspectRatio="xMinYMin meet">
            <g class="frame" transform="translate(690 -15)">
              <!-- back post -->
              <polygon class="l" points="427,130 460,112 460,560 427,560"/>
              <polygon class="d" points="460,112 492,130 492,560 460,560"/>
              <!-- lower back bars -->
              <polygon class="t" points="105,690 395,522 430,542 105,727"/>
              <polygon class="d" points="105,727 430,542 430,580 145,748 105,740"/>
              <polygon class="t" points="490,542 520,522 815,692 815,728"/>
              <polygon class="l" points="490,542 815,728 783,748 490,580"/>
              <!-- upper left -->
              <polygon class="t" points="40,283 430,58 460,77 70,300"/>
              <polygon class="d" points="70,300 460,77 460,115 145,300 105,283"/>
              <!-- upper right -->
              <polygon class="t" points="430,58 460,40 845,264 815,282 460,77"/>
              <polygon class="l" points="460,77 815,282 780,300 460,115"/>
              <!-- right post -->
              <polygon class="l" points="815,345 847,330 847,748 815,728"/>
              <polygon class="d" points="847,330 878,315 878,728 847,748"/>
              <polygon class="t" points="845,264 878,285 495,506 463,488"/>
              <polygon class="d" points="878,285 878,320 495,540 495,506"/>
            </g>
            <g class="frame" transform="translate(1080 555)">
              <polygon class="t" points="425,158 455,178 103,382 103,342"/>
              <polygon class="d" points="455,178 455,215 135,400 103,382"/>
              <!-- far rail -->
              <polygon class="t" points="455,178 490,158 1390,680 1355,698"/>
              <polygon class="l" points="455,178 1355,698 1355,735 455,215"/>
              <polygon class="d" points="1355,698 1390,680 1390,718 1358,737"/>
              <!-- cross bars -->
              <polygon class="t" points="1003,492 1035,512 690,714 660,694"/>
              <polygon class="d" points="1035,512 1035,550 705,742 690,714"/>
              <polygon class="t" points="1325,681 1355,698 972,920 940,902"/>
              <polygon class="d" points="1355,698 1358,737 972,958 972,920"/>
              <!-- near rail -->
              <polygon class="t" points="53,390 103,382 972,884 940,902"/>
              <polygon class="l" points="53,390 940,902 940,940 53,428"/>
              <polygon class="l" points="940,902 972,920 972,958 940,940"/>
            </g>
            <g class="frame" transform="translate(690 -15)">
              <!-- front left -->
              <polygon class="t" points="75,745 105,727 443,922 443,960"/>
              <polygon class="l" points="75,745 443,960 443,998 72,782"/>
              <polygon class="l" points="40,320 72,338 72,745 40,730"/>
              <polygon class="d" points="72,338 105,355 105,727 72,745"/>
              <polygon class="l" points="40,730 72,745 72,782 40,765"/>
              <polygon class="l" points="40,283 72,300 72,338 40,320"/>
              <!-- front post -->
              <polygon class="l" points="427,540 460,560 460,968 427,950"/>
              <polygon class="d" points="460,560 492,540 492,948 460,968"/>
              <polygon class="t" points="72,300 105,283 492,505 460,522"/>
              <polygon class="l" points="72,300 460,522 460,560 72,338"/>
              <polygon class="pickbox" points="458,521 494,502 494,542 458,561"/>
            </g>
            <!-- braces -->
            <g class="frame" transform="translate(1080 555)">
              <polygon class="t" points="460,-155 490,-170 1150,542 1118,558"/>
              <polygon class="l" points="460,-155 1118,558 1035,512 460,-115"/>
              <polygon class="t" points="72,72 103,55 765,765 733,780"/>
              <polygon class="l" points="72,72 733,780 655,735 72,115"/>
            </g>
            <!-- datum planes -->
            <g class="planes" transform="translate(420 -135)">
              <polygon points="482,140 590,195 590,325 482,270" fill="#3c6" fill-opacity=".1" stroke="#3ee04f"/>
              <polygon points="590,140 590,265 482,322 482,200" fill="#d68" fill-opacity=".15" stroke="#cf3149"/>
              <polygon points="430,233 540,172 640,233 535,293" fill="#66c" fill-opacity=".12" stroke="#3a35ad"/>
              <path d="M536 233V175" stroke="#1414ae" stroke-width="10"/>
              <path d="M523 180l13-35 13 35z" fill="#1414ae"/>
              <path d="M536 233l40-20" stroke="#18c818" stroke-width="9"/>
              <path d="M568 204l30-4-18 25z" fill="#18c818"/>
              <path d="M536 233l38 20" stroke="#c8101f" stroke-width="10"/>
              <path d="M568 260l12-22 22 30z" fill="#c8101f"/>
              <text x="604" y="200" fill="#25d425">Y</text>
              <text x="603" y="290" fill="#c82338">X</text>
            </g>
            <!-- view triad -->
            <g class="triad" transform="translate(-30 1275)">
              <path d="M174 150v-55" stroke="#1b1baa" stroke-width="10"/>
              <path d="M161 103l13-28 13 28z" fill="#1b1baa"/>
              <path d="M176 150l38-22" stroke="#22c02a" stroke-width="10"/>
              <path d="M207 118l32-7-20 25z" fill="#22a52a"/>
              <path d="M174 150l40 23" stroke="#c01325" stroke-width="10"/>
              <path d="M205 180l14-22 19 28z" fill="#c01325"/>
              <text x="162" y="74" fill="#2b2bb2">Z</text>
              <text x="240" y="118" fill="#43d64a">Y</text>
              <text x="241" y="208" fill="#c8283c">X</text>
            </g>
          </svg>
          <div class="viewbar">
            <button aria-label="退出"><svg class="icon"><use href="#s-exit"/></svg></button>
            <button class="wide" aria-label="显示"><svg class="icon"><use href="#s-cube"/></svg><svg class="caret"><use href="#w-caret"/></svg></button>
            <button aria-label="擦除"><svg class="icon"><use href="#s-del"/></svg></button>
            <button aria-label="截面"><svg class="icon"><use href="#s-ycube"/></svg></button>
            <button class="wide" aria-label="着色"><svg class="icon"><use href="#s-cube"/></svg><svg class="caret"><use href="#w-caret"/></svg></button>
            <button class="wide" aria-label="线框"><svg class="icon"><use href="#s-wire"/></svg><svg class="caret"><use href="#w-caret"/></svg></button>
            <button class="wide" aria-label="等轴测"><svg class="icon"><use href="#s-hex"/></svg><svg class="caret"><use href="#w-caret"/></svg></button>
            <button class="wide" aria-label="缩放"><svg class="icon"><use href="#s-zoom"/></svg><svg class="caret"><use href="#w-caret"/></svg></button>
            <button aria-label="窗口"><svg class="icon"><use href="#s-frame"/></svg></button>
            <button class="wide" aria-label="标注"><svg class="icon"><use href="#s-dim"/></svg><svg class="caret"><use href="#w-caret"/></svg></button>
            <button class="wide" aria-label="背景"><svg class="icon"><use href="#s-shade"/></svg><svg class="caret"><use href="#w-caret"/></svg></button>
            <button aria-label="线色"><svg class="icon"><use href="#s-black"/></svg></button>
            <button aria-label="面色"><svg class="icon"><use href="#s-sky"/></svg></button>
            <button class="wide" aria-label="图层"><svg class="icon"><use href="#s-sheet"/></svg><svg class="caret"><use href="#w-caret"/></svg></button>
            <div class="layer">
              <svg class="icon" viewBox="0 0 16 16"><path d="M8 1a4 4 0 0 0-2 8v3h4V9a4 4 0 0 0-2-8z" fill="#faf5bd" stroke="#a49d6d"/><path d="M6 14h4" stroke="#777" stroke-width="2"/></svg>
              <svg class="icon" viewBox="0 0 16 16"><circle cx="8" cy="8" r="6" fill="#d5dc2c" stroke="#8e9440"/></svg>
              <select class="combo" aria-label="当前图层"><option>图层0000</option></select>
            </div>
          </div>
          <p class="scale">3429.27 mm</p>
        </div>
      </section>
    </div>

    <footer class="status">
      <p>选择命令或实体</p>
      <span class="sep"></span>
      <button class="on" aria-label="输出"><svg class="icon" viewBox="0 0 16 16"><path d="M2 2h12v12H2z" fill="#eef1f6" stroke="#6076a3"/><path d="M2 2h12v3H2z" fill="#5c7ab5"/><path d="M6 5v9M3 8h2M3 11h2M8 8h5M10.500 8v5" stroke="#556"/></svg></button>
      <button aria-label="消息"><svg class="icon" viewBox="0 0 16 16"><path d="M2 2h12v12H2z" fill="#e3e8f2" stroke="#6076a3"/><path d="M2 2h12v3H2z" fill="#6c88bf"/><path d="M4 8h8M4 11h8" stroke="#6d83b0"/></svg></button>
      <input type="text" aria-label="命令输入">
    </footer>
  </main>
  <p class="mark">tigerenter.com</p>
</body>

</html>
```
FILE: styles.css
```
* {
  box-sizing: border-box;
}

body {
  margin: 0;
  height: 100vh;
  overflow: hidden;
  display: flex;
  flex-direction: column;
  background: #101010;
  color: #222;
  font: 10px/15px "Open Sans", "Noto Sans CJK SC", sans-serif;
}

h1, h2, h3, p, ul {
  margin: 0;
  padding: 0;
  font: inherit;
}

button, input, select {
  margin: 0;
  padding: 0;
  border: 0;
  border-radius: 0;
  background: none;
  color: inherit;
  font: inherit;
}

button {
  display: flex;
  align-items: center;
  justify-content: center;
  flex: none;
  white-space: nowrap;
}

svg {
  display: block;
  flex: none;
}

.sprite {
  position: absolute;
  width: 0;
  height: 0;
}

.icon { width: 16px; height: 16px; }
.big { width: 28px; height: 28px; }
.caret { width: 5px; height: 3px; }
.wide { gap: 4px; }

.bom-text {
  font: bold 8px "Liberation Sans", sans-serif;
  fill: #fff;
  text-anchor: middle;
}

.datum-text {
  font: bold 9px "Liberation Sans", sans-serif;
  fill: #b41d38;
  text-anchor: middle;
}

.sep {
  flex: none;
  width: 1px;
  height: 14px;
  background: #aeaeb3;
}

.on {
  background: #f1df86;
  border: 1px solid #c8b04e;
}

.app {
  flex: 1;
  min-height: 0;
  margin: 24px 13px 0;
  display: flex;
  flex-direction: column;
  background: #d4d4d8;
}

/* Title row */
.titlebar {
  flex: none;
  height: 21px;
  display: flex;
  align-items: center;
}

.quick {
  flex: 0 0 206px;
  display: flex;
  align-items: center;
  gap: 5px;
  padding-left: 1px;
}

.quick .icon { width: 15px; height: 15px; }
.quick .sep { margin-right: 3px; }

.menu {
  flex: 0 0 500px;
  display: flex;
  justify-content: space-between;
  padding-left: 4px;
}

.title {
  margin-left: auto;
  padding-right: 162px;
  display: flex;
  gap: 26px;
  font-size: 11px;
  color: #555;
  white-space: nowrap;
}

.winctl {
  display: flex;
  gap: 8px;
  margin-right: 6px;
}

.winctl svg, .docctl svg { width: 12px; height: 12px; }

/* Ribbon tabs */
.tabbar {
  flex: none;
  height: 20px;
  display: flex;
  align-items: flex-end;
  border-bottom: 1px solid #b9b9be;
  color: #505055;
}

.file-tab {
  width: 65px;
  height: 18px;
  margin: 0 3px 0 2px;
  background: #2e58a8;
  color: #fff;
}

.tabs {
  flex: 0 0 713px;
  display: flex;
  justify-content: space-between;
}

.tabs button {
  height: 18px;
  padding: 0 9px;
}

.tabs .active {
  padding: 0 7px;
  background: #e8e8e9;
  border: solid #bcbcc1;
  border-width: 1px 1px 0;
}

.docctl {
  margin-left: auto;
  height: 19px;
  display: flex;
  align-items: center;
  gap: 3px;
  margin-right: 4px;
}

.docctl .caret { width: 5px; height: 3px; margin: 0 2px 0 3px; }
.docctl .far { margin-right: 18px; }
.docctl .mid { margin-right: 13px; }

/* Ribbon */
.ribbon {
  flex: none;
  height: 85px;
  display: flex;
  padding: 4px 0 3px;
  background: #e8e8e9;
  border-bottom: 1px solid #b6b6bb;
}

.group {
  display: flex;
  flex-direction: column;
  justify-content: space-between;
  padding: 0 9px;
  border-right: 1px solid #cdcdd2;
  text-align: center;
}

.group.path { padding: 0 5px 0 12px; }
.group.narrow { padding: 0 6px; }
.group p { color: #777783; }

.cmds {
  display: flex;
  gap: 10px;
}

.cmds.tight { gap: 6px; }

.cmds button {
  flex-direction: column;
  justify-content: flex-start;
  min-width: 28px;
  color: #333;
}

.cmds .caret { margin-top: 8px; }
.cmds .big { margin-bottom: 3px; }

/* Selection filter bar */
.filterbar {
  flex: none;
  height: 26px;
  display: flex;
  align-items: center;
  gap: 4px;
  padding-left: 4px;
}

.filterbar .on { width: 20px; height: 19px; }

.filters {
  display: flex;
  gap: 1px;
}

.grip {
  width: 2px;
  height: 14px;
  border-left: 2px dotted #8c8c95;
}

.combo {
  appearance: none;
  height: 18px;
  padding: 0 3px;
  border: 1px solid #c4c4c9;
  background: linear-gradient(#333, #333) right 4px top 7px / 5px 1px no-repeat,
    linear-gradient(#333, #333) right 5px top 8px / 3px 1px no-repeat,
    linear-gradient(#333, #333) right 6px top 9px / 1px 1px no-repeat,
    #ebebec;
  color: #111;
}

.pick { width: 94px; }
.scope { width: 126px; }

/* Work area */
.work {
  flex: 1;
  min-height: 0;
  display: flex;
}

.manager {
  flex: 0 0 247px;
  min-width: 0;
  display: flex;
  flex-direction: column;
  border-right: 1px solid #b8b8bd;
}

.manager-head {
  flex: none;
  height: 18px;
  display: flex;
  align-items: center;
  gap: 6px;
  padding: 0 6px 0 5px;
}

.manager-head h2 { flex: 1; }
.manager-head svg { width: 10px; height: 10px; }

.manager-body {
  flex: 1;
  min-height: 0;
  display: flex;
  padding-right: 3px;
}

.pages {
  flex: 0 0 28px;
  display: flex;
  flex-direction: column;
  gap: 4px;
}

.pages button { height: 36px; }
.pages svg { width: 22px; height: 22px; }
.pages .active { background: #e9e9ea; }

.panel {
  flex: 1;
  min-width: 0;
  display: flex;
  flex-direction: column;
  border: 1px solid #b5b5ba;
}

.find {
  flex: none;
  display: flex;
  border-bottom: 1px solid #bcbcc1;
}

.find .combo { width: 107px; height: 20px; padding: 0 1px; }

.find input {
  flex: 1;
  width: 0;
  border: 1px solid #c4c4c9;
  background: #ebebec;
}

.history {
  flex: 1;
  min-height: 0;
  display: flex;
  padding-top: 1px;
  background: #e9e9ea;
}

.tree {
  flex: 1;
  display: flex;
  flex-direction: column;
  padding-bottom: 2px;
  list-style: none;
}

.tree li {
  flex: 1;
  display: flex;
  align-items: center;
  padding-left: 25px;
}

.tree li:nth-child(odd) { background: #e3e3e4; }

.tree label {
  display: flex;
  align-items: center;
  padding: 0 6px 0 1px;
}

.tree svg { width: 14px; height: 14px; margin: 0 4px 0 5px; }
.hot label { background: #eadf9c; outline: 1px solid #d6c878; outline-offset: -1px; }
.tree .stop { gap: 5px; color: #cc2340; }
.tree .stop svg { margin: 0 0 0 1px; }

.tree input {
  appearance: none;
  width: 12px;
  height: 12px;
  display: grid;
  place-items: center;
  border: 1px solid #3c403c;
  background: #f1f4f1;
}

.tree input:checked::before {
  content: "";
  width: 4px;
  height: 7px;
  margin-bottom: 2px;
  border: solid #3aae47;
  border-width: 0 2px 2px 0;
  transform: rotate(40deg);
}

.scroll {
  flex: 0 0 13px;
  display: flex;
  flex-direction: column;
  align-items: center;
  background: #d0d0d5;
}

.up, .down, .tri {
  border: 4px solid transparent;
}

.up { margin-bottom: auto; border-bottom: 5px solid #555; border-top-width: 0; margin-top: 4px; }
.down { border-top: 5px solid #555; border-bottom-width: 0; margin: 4px 0 5px; }

.thumb {
  flex: 0 0 47%;
  width: 12px;
  border: 1px solid #a2a2ac;
  background: repeating-linear-gradient(#888 0 1px, transparent 1px 3px) center / 7px 7px no-repeat, #dcdce3;
}

.replay-head {
  flex: none;
  height: 22px;
  display: flex;
  align-items: center;
  gap: 5px;
  padding-left: 3px;
  border-top: 2px solid #bfbfc4;
  background: #e9e9ea;
}

.tri { border-top: 7px solid #444; border-bottom: 0; }

.replay {
  flex: none;
  padding: 5px 9px;
}

.keys {
  display: flex;
  justify-content: space-between;
}

.second { padding: 4px 16px 0; }

.keys button {
  width: 31px;
  height: 27px;
  background: #dcdcde;
  border: 1px solid #c8c8cc;
}

.keys svg { width: 24px; height: 20px; }
.keys .live { background: #f4f4f5; border-color: #b2b2b7; }

/* Documents */
.docs {
  flex: 1;
  min-width: 0;
  display: flex;
  flex-direction: column;
}

.doctabs {
  flex: none;
  height: 19px;
  display: flex;
  align-items: stretch;
  padding-left: 8px;
  border-bottom: 1px solid #b8b8bd;
}

.doctab {
  display: flex;
  align-items: center;
  gap: 7px;
  padding: 0 19px 0 20px;
  white-space: nowrap;
}

.doctab svg, .newtab svg, .tablist svg { width: 10px; height: 10px; }

.doctab.active {
  margin-bottom: -1px;
  padding: 0 11px 0 8px;
  background: #eaeaea;
  border-right: 1px solid #b8b8bd;
}

.doctab.active > svg { color: #776b4f; }
.newtab { margin-left: 6px; color: #8d8d92; }
.tablist { margin: 0 6px 0 auto; }

.viewport {
  flex: 1;
  min-height: 0;
  position: relative;
  display: flex;
  flex-direction: column;
  justify-content: space-between;
  background: #eaeaea;
}

.scene {
  position: absolute;
  inset: 0;
  width: 100%;
  height: 100%;
}

.frame {
  stroke: #1e282d;
  stroke-width: 3;
  stroke-linejoin: round;
}

.frame .t { fill: #9cb6bf; }
.frame .l { fill: #889fa8; }
.frame .d { fill: #4d5761; }
.frame .pickbox { fill: #625d1c; stroke: #f3f01c; stroke-width: 7; }

.planes, .triad {
  stroke-width: 4;
  font-size: 36px;
}

.planes text, .triad text { stroke: none; }
.triad text { font-size: 40px; }

.viewbar {
  position: relative;
  display: flex;
  align-items: center;
  gap: 6px;
  padding: 2px 0 0 308px;
}

.layer {
  display: flex;
  align-items: center;
  width: 100px;
  height: 19px;
  padding-left: 2px;
  border: 1px solid #b9b9be;
}

.layer .icon { width: 14px; height: 14px; }
.layer .combo { flex: 1; min-width: 0; border: 0; height: 16px; }

.scale {
  position: relative;
  padding: 0 0 1px 5px;
  font-size: 14px;
  line-height: 18px;
}

/* Status bar */
.status {
  flex: none;
  height: 26px;
  display: flex;
  align-items: center;
  gap: 4px;
  padding: 0 1px 0 5px;
  border-top: 1px solid #b4b4b9;
}

.status p { flex: 1; color: #444; }
.status .sep { height: 22px; }
.status button { width: 20px; height: 20px; }

.status input {
  flex: 0 0 22%;
  height: 19px;
  border: 1px solid #bfbfc4;
  background: #e9e9ea;
}

.mark {
  flex: none;
  align-self: flex-end;
  height: 24px;
  font: bold 15px/16px "Liberation Mono", monospace;
  color: #fff;
}
```
